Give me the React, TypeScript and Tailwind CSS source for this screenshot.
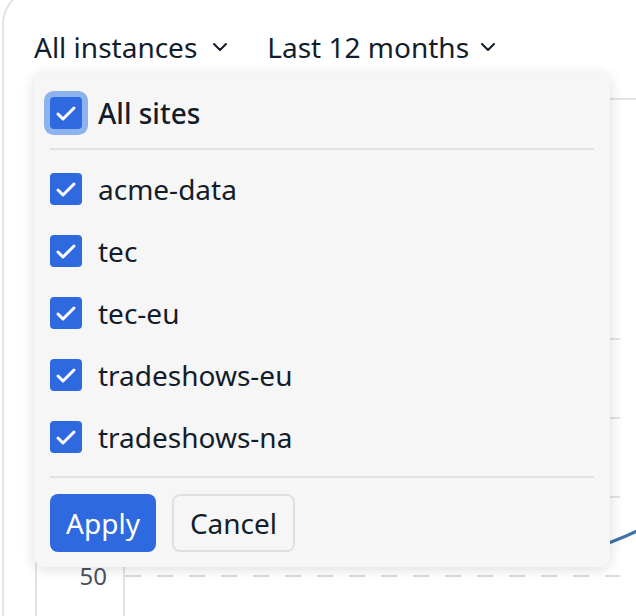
import { useState } from "react";

const sites = ["acme-data", "tec", "tec-eu", "tradeshows-eu", "tradeshows-na"];

function Check({ focused = false }: { focused?: boolean }) {
  return (
    <span
      className={
        "flex h-8 w-8 shrink-0 items-center justify-center rounded-[4px] bg-[#2f69e0] " +
        (focused ? "ring-[6px] ring-[#8cb3ee]" : "")
      }
    >
      <svg width="32" height="32" viewBox="0 0 32 32" fill="none">
        <path
          d="M8 17l5 5 11-11"
          stroke="white"
          strokeWidth="3"
          strokeLinecap="round"
          strokeLinejoin="round"
        />
      </svg>
    </span>
  );
}

function Chevron() {
  return (
    <svg width="14" height="8" viewBox="0 0 14 8" fill="none">
      <path d="M1 1l6 6 6-6" stroke="#131d2b" strokeWidth="2" strokeLinecap="round" strokeLinejoin="round" />
    </svg>
  );
}

function Chart() {
  const solid = [239, 318, 397];
  return (
    <svg width="599" height="516" viewBox="0 0 599 516" className="block">
      <line x1="87" y1="0" x2="87" y2="516" stroke="#e3e3e3" strokeWidth="2" />
      {solid.map((y) => (
        <line key={y} x1="88" y1={y} x2="583" y2={y} stroke="#e3e3e3" strokeWidth="2" />
      ))}
      <line x1="88" y1="476" x2="583" y2="476" stroke="#dcdcdc" strokeWidth="2" strokeDasharray="16 16" />
      <text
        x="70"
        y="485"
        textAnchor="end"
        fontSize="24"
        fill="#4b5260"
        fontFamily="'Noto Sans', sans-serif"
      >
        50
      </text>
      <path d="M500 462 Q556 452 600 431" stroke="#3f71ac" strokeWidth="3" fill="none" />
    </svg>
  );
}

export default function App() {
  const [checked] = useState(sites);

  return (
    <div className="relative h-[616px] w-[636px] overflow-hidden bg-white font-['Noto_Sans',sans-serif] text-[#131d2b]">
      <div className="ml-[2px] mt-[-12px] h-[640px] rounded-tl-[36px] border-l-2 border-t-2 border-[#e3e3e3] pl-[30px] pt-[37px]">
        <div className="flex h-[40px] items-center text-[28px] leading-[40px]">
          <span>All instances</span>
          <span className="ml-4">
            <Chevron />
          </span>
          <span className="ml-10">Last 12 months</span>
          <span className="ml-3">
            <Chevron />
          </span>
        </div>
        <div className="ml-[1px] mt-[31px] border-l-2 border-t-2 border-[#e3e3e3]">
          <Chart />
        </div>
      </div>

      <div className="absolute left-[34px] top-[73px] flex w-[576px] flex-col rounded-[10px] bg-[#f6f6f6] px-4 pb-[15px] pt-[24px] shadow-[0_2px_14px_rgba(0,0,0,0.14)]">
        <label className="flex h-8 items-center gap-4 text-[28px] font-medium">
          <Check focused />
          <span>All sites</span>
        </label>
        <div className="mt-[19px] h-[2px] bg-[#e2e2e2]" />
        <ul className="mt-2">
          {checked.map((s) => (
            <li key={s} className="flex h-[62px] items-center gap-4 text-[28px]">
              <Check />
              <span>{s}</span>
            </li>
          ))}
        </ul>
        <div className="mt-2 h-[2px] bg-[#e2e2e2]" />
        <div className="mt-4 flex gap-4">
          <button className="h-[58px] w-[106px] rounded-[8px] bg-[#2f69e0] text-[28px] text-white">
            Apply
          </button>
          <button className="h-[58px] w-[123px] rounded-[8px] border-2 border-[#e0e0e0] bg-[#f6f6f6] text-[28px]">
            Cancel
          </button>
        </div>
      </div>
    </div>
  );
}
